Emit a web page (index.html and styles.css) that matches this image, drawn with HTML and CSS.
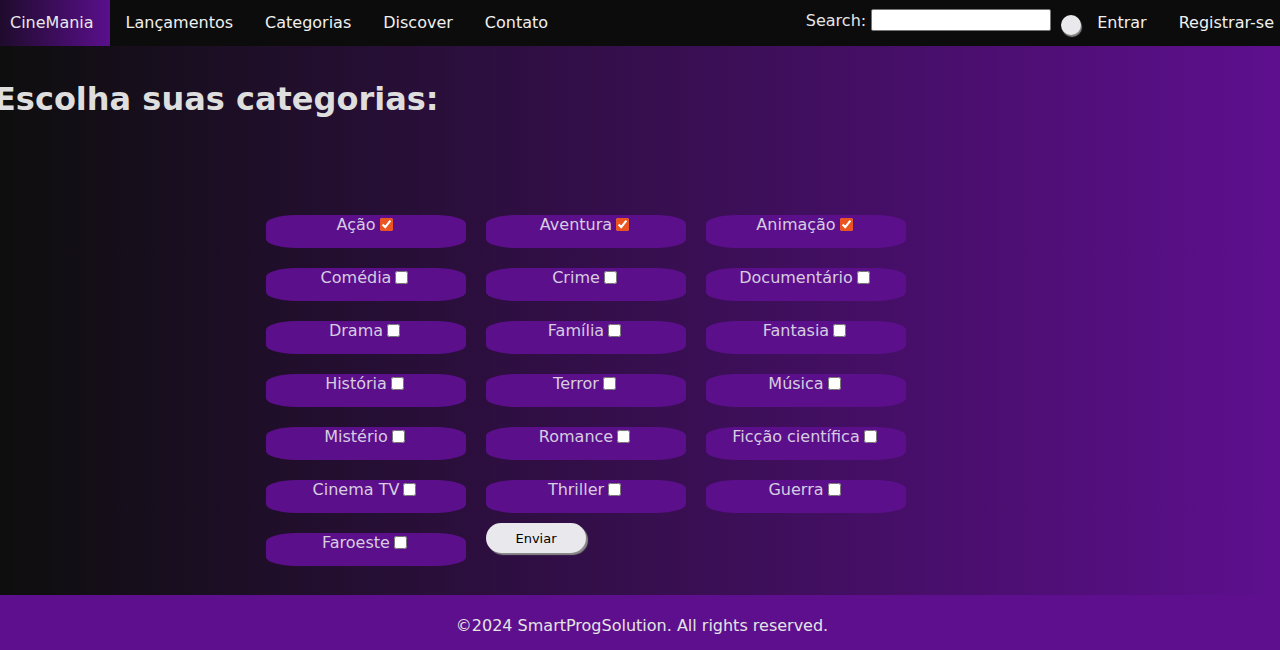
FILE: index.html
```html
<!DOCTYPE html>
<html lang="pt">
<head>
<meta charset="utf-8">
<title>CineMania</title>
<link rel="stylesheet" href="styles.css">
</head>
<body>
<header class="navbar">
  <nav class="nav-left">
    <a class="brand" href="#">CineMania</a>
    <a class="nav-link" href="#">Lançamentos</a>
    <a class="nav-link" href="#">Categorias</a>
    <a class="nav-link" href="#">Discover</a>
    <a class="nav-link" href="#">Contato</a>
  </nav>
  <div class="nav-right">
    <label class="search-label">Search: <input class="search-input" type="text"></label>
    <button class="theme-toggle" type="button" aria-label="tema"></button>
    <a class="nav-link" href="#">Entrar</a>
    <a class="nav-link last" href="#">Registrar-se</a>
  </div>
</header>
<main class="main">
  <h1 class="title">Escolha suas categorias:</h1>
  <form class="cat-form">
    <label class="pill">Ação<input type="checkbox" checked></label>
    <label class="pill">Aventura<input type="checkbox" checked></label>
    <label class="pill">Animação<input type="checkbox" checked></label>
    <label class="pill">Comédia<input type="checkbox"></label>
    <label class="pill">Crime<input type="checkbox"></label>
    <label class="pill">Documentário<input type="checkbox"></label>
    <label class="pill">Drama<input type="checkbox"></label>
    <label class="pill">Família<input type="checkbox"></label>
    <label class="pill">Fantasia<input type="checkbox"></label>
    <label class="pill">História<input type="checkbox"></label>
    <label class="pill">Terror<input type="checkbox"></label>
    <label class="pill">Música<input type="checkbox"></label>
    <label class="pill">Mistério<input type="checkbox"></label>
    <label class="pill">Romance<input type="checkbox"></label>
    <label class="pill">Ficção científica<input type="checkbox"></label>
    <label class="pill">Cinema TV<input type="checkbox"></label>
    <label class="pill">Thriller<input type="checkbox"></label>
    <label class="pill">Guerra<input type="checkbox"></label>
    <label class="pill">Faroeste<input type="checkbox"></label>
    <div class="submit-cell"><button class="submit-btn" type="button">Enviar</button></div>
  </form>
</main>
<footer class="footer">©2024 SmartProgSolution. All rights reserved.</footer>
</body>
</html>
```
FILE: styles.css
```css
* { box-sizing: border-box; }
html, body { margin: 0; padding: 0; }
body {
  font-family: "DejaVu Sans", Verdana, sans-serif;
  font-size: 16px;
  color: #e0e0e0;
  background: #0c0c0c;
}
.navbar {
  height: 46px;
  background: #0c0c0c;
  display: flex;
  justify-content: space-between;
  align-items: stretch;
}
.nav-left, .nav-right {
  display: flex;
  align-items: center;
}
.brand {
  height: 46px;
  display: flex;
  align-items: center;
  padding: 0 16px 2px 10px;
  color: #e8e8e8;
  text-decoration: none;
  background: linear-gradient(to right, #1f0b2c, #5a0f8c);
}
.nav-link {
  color: #f0f0f0;
  text-decoration: none;
  padding: 0 16px 2px;
  height: 46px;
  display: flex;
  align-items: center;
}
.nav-link.last { padding-right: 6px; }
.search-label {
  display: flex;
  align-items: center;
  color: #e6e6e6;
  margin-top: -6px;
}
.search-input {
  width: 180px;
  height: 22px;
  margin-left: 5px;
  border: 1px solid #767676;
  border-radius: 2px;
  background: #fff;
  padding: 1px 2px;
}
.theme-toggle {
  width: 20px;
  height: 20px;
  border-radius: 50%;
  border: none;
  background: #e9e9ed;
  box-shadow: 1px 2px 1px #8a8a8a;
  margin: 4px 0 0 10px;
  padding: 0;
}
.main {
  height: 549px;
  background: linear-gradient(to right, #0e0e0e, #5e0f8e);
  padding-top: 34px;
  overflow: hidden;
}
.title {
  margin: 0 0 0 -6px;
  font-size: 32px;
  font-weight: bold;
  color: #dedede;
  line-height: 38px;
}
.cat-form {
  margin: 97px 0 0 266px;
  display: grid;
  grid-template-columns: repeat(3, 200px);
  column-gap: 20px;
  row-gap: 20px;
}
.pill {
  height: 33px;
  background: #5c0f8b;
  border-radius: 30px / 9px;
  color: #d6cde0;
  text-align: center;
  line-height: 19px;
  font-size: 16px;
}
.pill input {
  width: 13px;
  height: 13px;
  margin: 0 3px 0 4px;
  vertical-align: -1px;
  accent-color: #e95420;
}
.submit-cell { margin-top: -10px; }
.submit-btn {
  width: 100px;
  height: 30px;
  border-radius: 15px;
  border: none;
  background: #e9e9ed;
  box-shadow: 2px 2px 1px #8a8a8a;
  font-family: "DejaVu Sans", Verdana, sans-serif;
  font-size: 13px;
  color: #000;
  padding: 0;
}
.footer {
  height: 55px;
  background: #5e0f8e;
  display: flex;
  align-items: center;
  justify-content: center;
  color: #e4e4e4;
  font-size: 16px;
  padding: 6px 0 0 4px;
}
```
